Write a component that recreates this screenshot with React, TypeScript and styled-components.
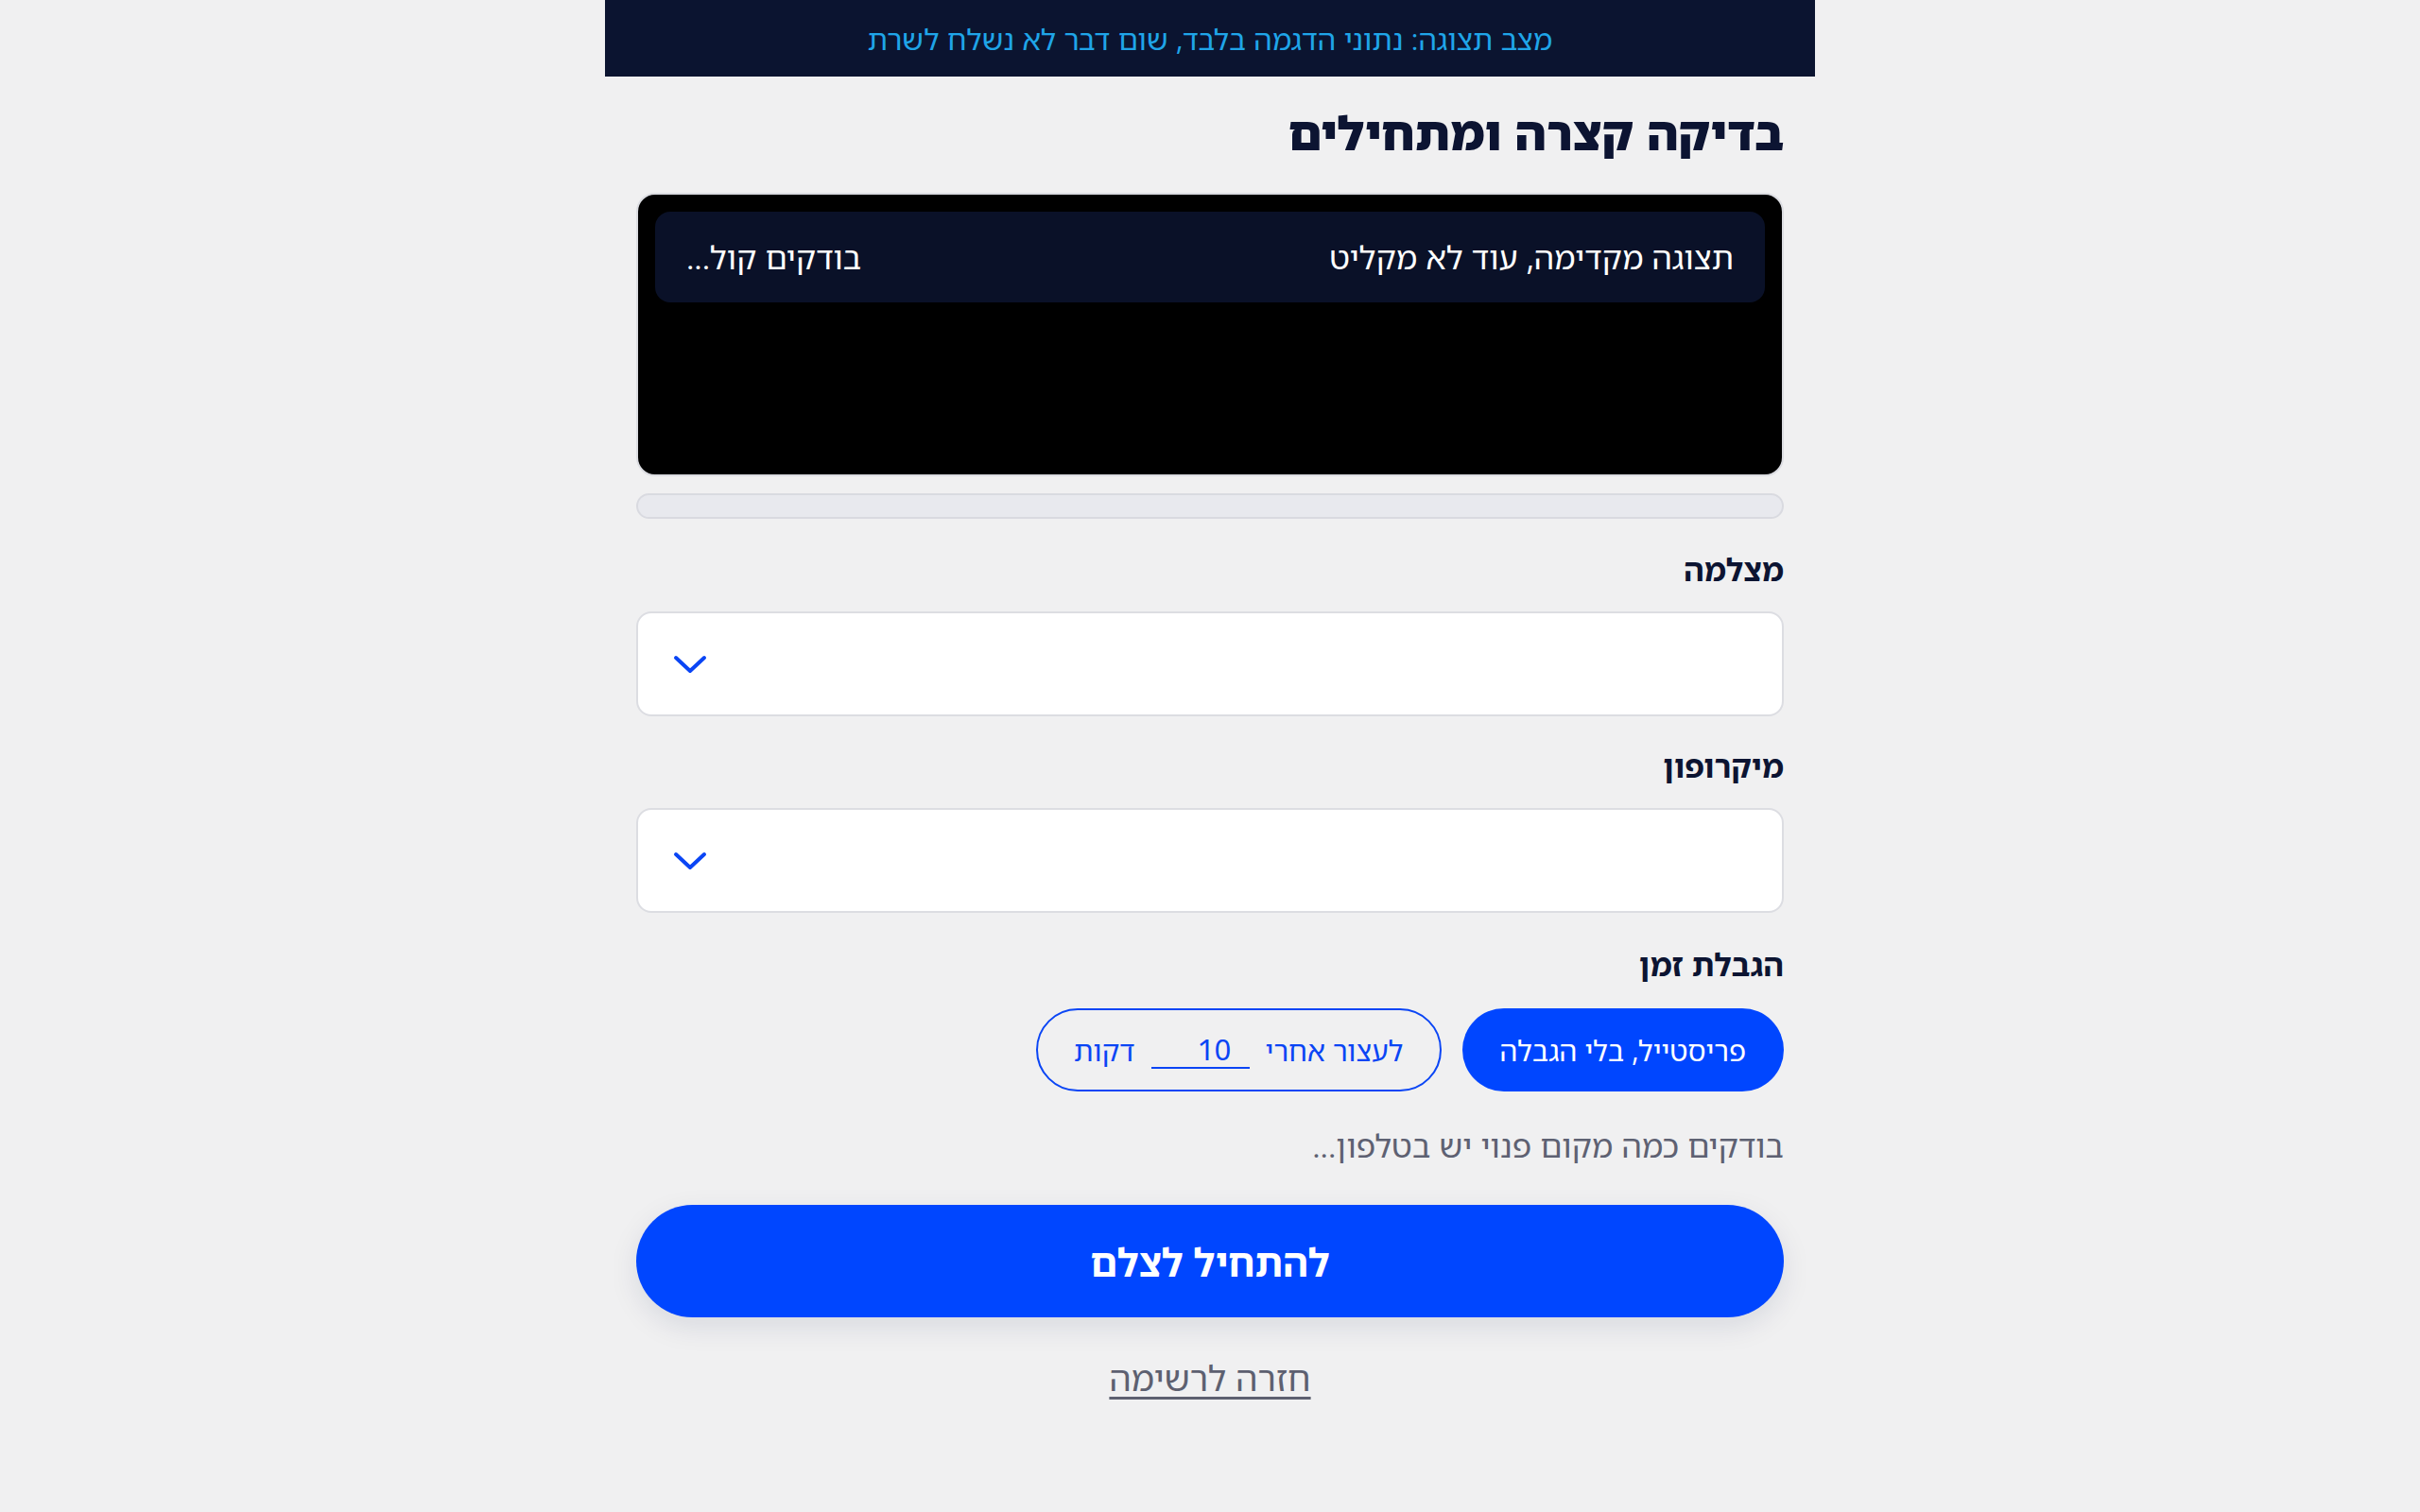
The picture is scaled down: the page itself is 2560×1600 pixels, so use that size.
import React from "react";
import styled, { createGlobalStyle } from "styled-components";

const GlobalStyle = createGlobalStyle`
  html, body {
    margin: 0;
    padding: 0;
    background: #f0f0f1;
    min-height: 100%;
  }
  body {
    font-family: "Noto Sans Hebrew", "Open Sans", "DejaVu Sans", sans-serif;
  }
  * { box-sizing: border-box; }
`;

const Page = styled.div`
  width: 1280px;
  margin: 0 auto;
  direction: rtl;
  display: flex;
  flex-direction: column;
`;

const Banner = styled.div`
  height: 81px;
  background: #0b1430;
  color: #1fa5e8;
  font-size: 31px;
  display: flex;
  align-items: center;
  justify-content: center;
`;

const Content = styled.main`
  padding: 29px 33px 80px 33px;
  display: flex;
  flex-direction: column;
`;

const Title = styled.h1`
  margin: 0;
  font-size: 50px;
  line-height: 60px;
  font-weight: 900;
  color: #0c1432;
`;

const VideoCard = styled.div`
  margin-top: 34px;
  height: 300px;
  background: #000;
  border: 2px solid #dcdde2;
  border-radius: 20px;
  padding: 18px;
`;

const Overlay = styled.div`
  height: 96px;
  border-radius: 16px;
  background: #0a1128;
  padding: 0 33px;
  display: flex;
  align-items: center;
  justify-content: space-between;
  color: #ffffff;
  font-size: 34px;
`;

const Meter = styled.div`
  margin-top: 18px;
  height: 27px;
  border-radius: 14px;
  background: #e8e9ee;
  border: 2px solid #d9dae0;
`;

const Field = styled.section<{ $top: number }>`
  margin-top: ${(p) => p.$top}px;
  display: flex;
  flex-direction: column;
  gap: 24px;
`;

const Label = styled.div`
  font-size: 33px;
  line-height: 40px;
  font-weight: 700;
  color: #0c1432;
`;

const Select = styled.div`
  height: 111px;
  background: #ffffff;
  border: 2px solid #dcdde2;
  border-radius: 16px;
  display: flex;
  align-items: center;
  justify-content: flex-end;
  padding-inline-end: 37px;
`;

const PillRow = styled.div`
  display: flex;
  gap: 22px;
  margin-top: 2px;
`;

const Pill = styled.div<{ $active?: boolean }>`
  height: 88px;
  border-radius: 44px;
  display: flex;
  align-items: center;
  gap: 17px;
  font-size: 30px;
  padding: 0 ${(p) => (p.$active ? 40 : 38)}px;
  background: ${(p) => (p.$active ? "#0046ff" : "transparent")};
  color: ${(p) => (p.$active ? "#ffffff" : "#0a45f5")};
  border: ${(p) => (p.$active ? "none" : "2px solid #0a45f5")};
`;

const MinutesInput = styled.input`
  width: 104px;
  height: 40px;
  border: none;
  border-bottom: 2px solid #0a45f5;
  background: transparent;
  color: #0a45f5;
  font-family: inherit;
  font-size: 31px;
  text-align: center;
  padding: 0 0 0 30px;
  outline: none;
  -moz-appearance: textfield;
  &::-webkit-inner-spin-button,
  &::-webkit-outer-spin-button {
    -webkit-appearance: none;
    margin: 0;
  }
`;

const Hint = styled.p`
  margin: 37px 0 0 0;
  font-size: 34px;
  line-height: 40px;
  color: #5e6172;
`;

const StartButton = styled.button`
  margin-top: 43px;
  height: 119px;
  border: none;
  border-radius: 60px;
  background: #0046ff;
  color: #ffffff;
  font-family: inherit;
  font-size: 41px;
  font-weight: 700;
  box-shadow: 0 10px 30px rgba(10, 30, 80, 0.1);
  cursor: pointer;
`;

const BackLink = styled.a`
  margin-top: 42px;
  align-self: center;
  font-size: 37px;
  line-height: 44px;
  color: #5d6070;
  text-decoration: underline;
  text-decoration-thickness: 3px;
  text-underline-offset: 6px;
  cursor: pointer;
`;

const Chevron = () => (
  <svg width="36" height="20" viewBox="0 0 36 20" fill="none">
    <polyline
      points="3,3 18,17 33,3"
      stroke="#0a45f5"
      strokeWidth="4"
      strokeLinecap="round"
      strokeLinejoin="round"
    />
  </svg>
);

export default function App() {
  return (
    <>
      <GlobalStyle />
      <Page lang="he">
        <Banner>מצב תצוגה: נתוני הדגמה בלבד, שום דבר לא נשלח לשרת</Banner>
        <Content>
          <Title>בדיקה קצרה ומתחילים</Title>
          <VideoCard>
            <Overlay>
              <span>תצוגה מקדימה, עוד לא מקליט</span>
              <span>בודקים קול...</span>
            </Overlay>
          </VideoCard>
          <Meter />
          <Field $top={34}>
            <Label>מצלמה</Label>
            <Select>
              <Chevron />
            </Select>
          </Field>
          <Field $top={33}>
            <Label>מיקרופון</Label>
            <Select>
              <Chevron />
            </Select>
          </Field>
          <Field $top={35}>
            <Label>הגבלת זמן</Label>
            <PillRow>
              <Pill $active>פריסטייל, בלי הגבלה</Pill>
              <Pill>
                <span>לעצור אחרי</span>
                <MinutesInput type="number" defaultValue={10} />
                <span>דקות</span>
              </Pill>
            </PillRow>
          </Field>
          <Hint>בודקים כמה מקום פנוי יש בטלפון...</Hint>
          <StartButton>להתחיל לצלם</StartButton>
          <BackLink>חזרה לרשימה</BackLink>
        </Content>
      </Page>
    </>
  );
}
